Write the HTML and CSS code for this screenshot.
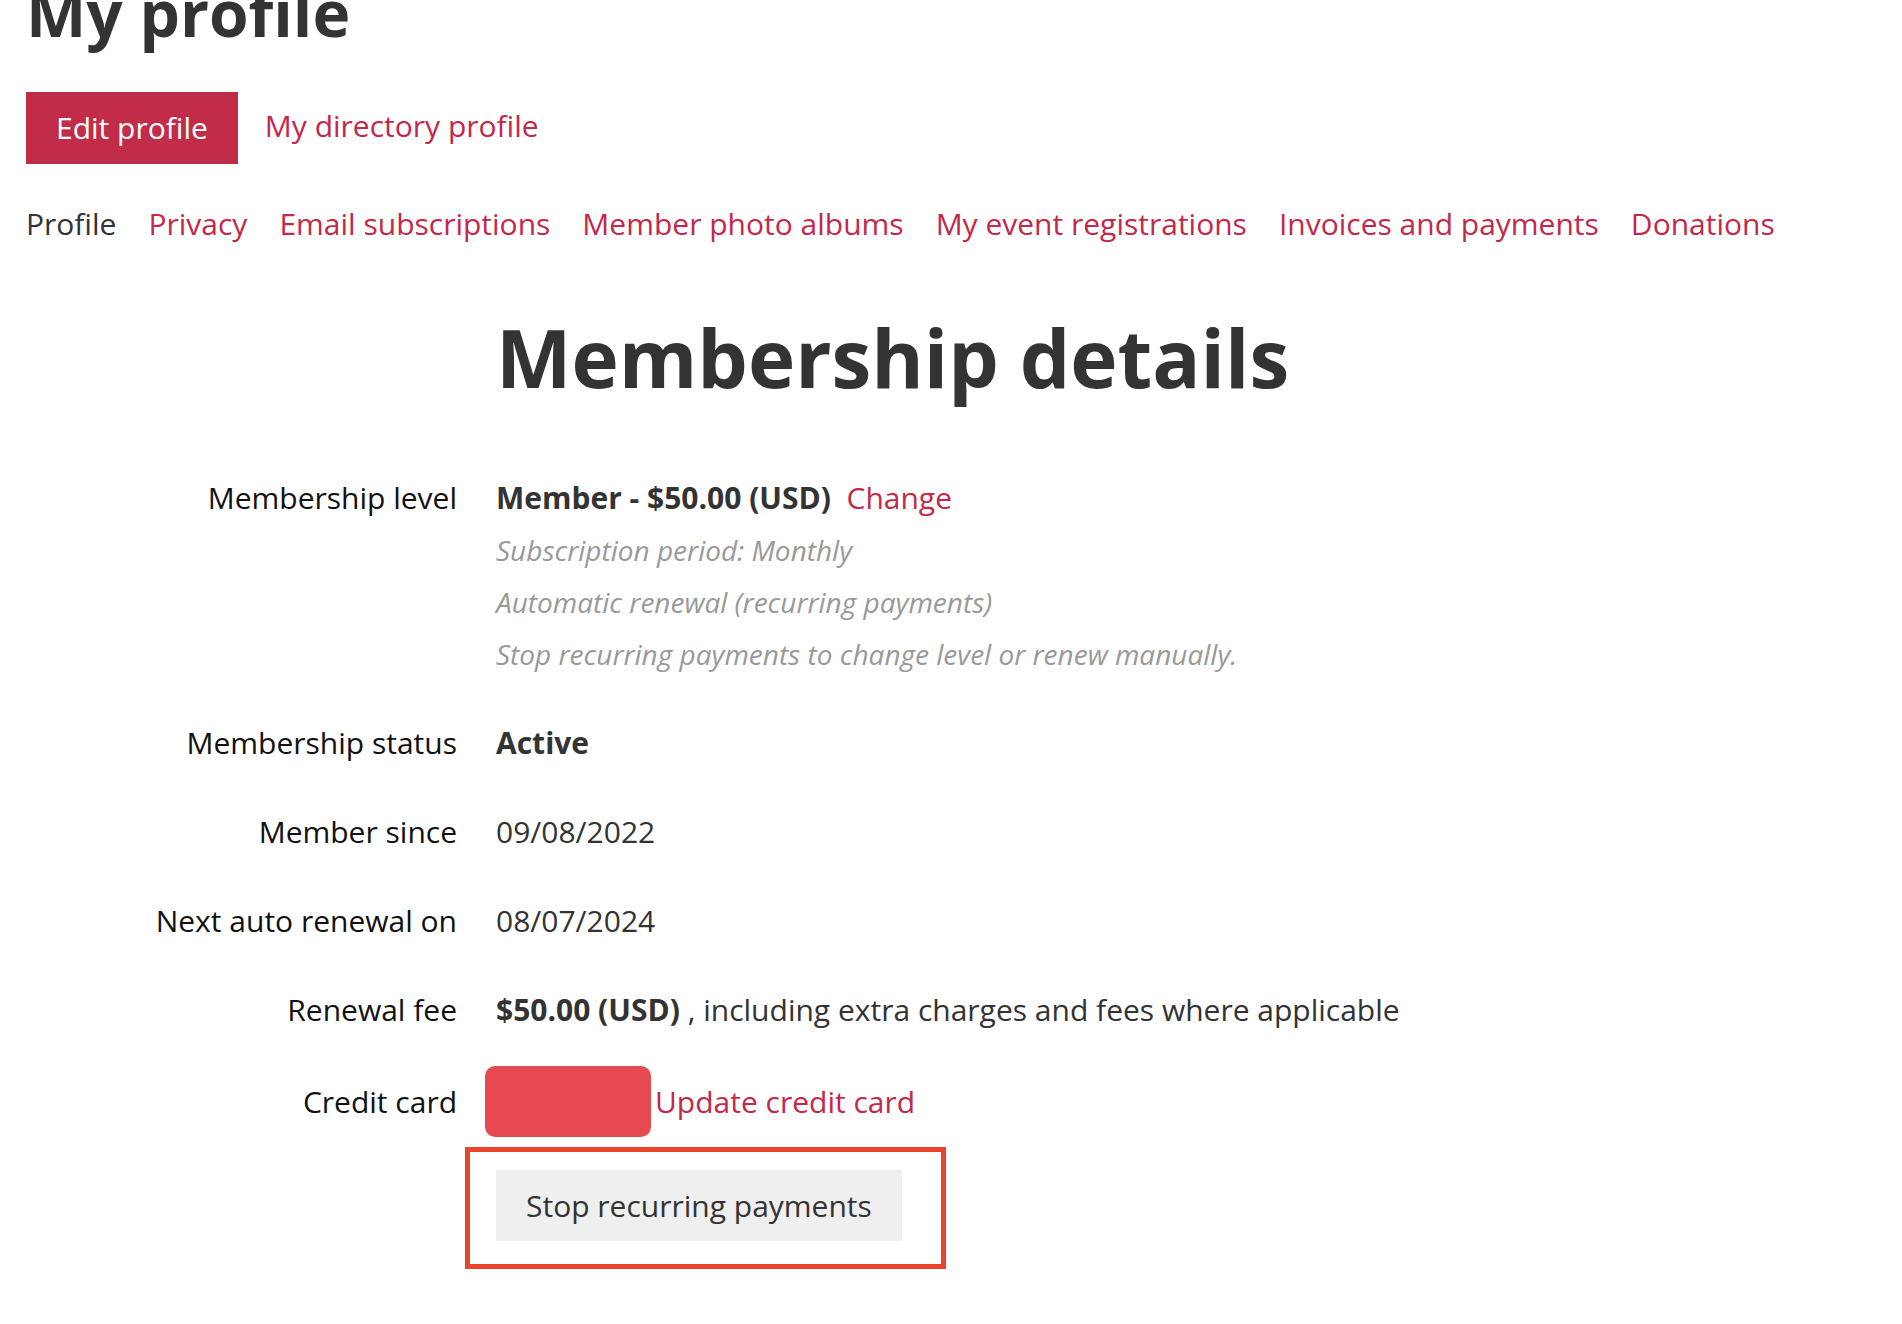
FILE: index.html
```html
<!DOCTYPE html>
<html lang="en">
<head>
<meta charset="utf-8">
<title>My profile</title>
<link rel="stylesheet" href="styles.css">
</head>
<body>
<div class="page">
  <h1 class="title">My profile</h1>
  <div class="actions">
    <a class="btn-primary" href="#">Edit profile</a>
    <a class="link" href="#">My directory profile</a>
  </div>
  <nav class="tabs">
    <span class="tab current">Profile</span>
    <a class="tab" href="#">Privacy</a>
    <a class="tab" href="#">Email subscriptions</a>
    <a class="tab" href="#">Member photo albums</a>
    <a class="tab" href="#">My event registrations</a>
    <a class="tab" href="#">Invoices and payments</a>
    <a class="tab" href="#">Donations</a>
  </nav>
  <section class="details">
    <div class="spacer"></div>
    <h2 class="heading">Membership details</h2>

    <div class="label">Membership level</div>
    <div class="value">
      <div><strong>Member - $50.00 (USD)</strong>&nbsp; <a class="link" href="#">Change</a></div>
      <div class="note">Subscription period: Monthly</div>
      <div class="note">Automatic renewal (recurring payments)</div>
      <div class="note">Stop recurring payments to change level or renew manually.</div>
    </div>

    <div class="label gap">Membership status</div>
    <div class="value gap"><strong>Active</strong></div>

    <div class="label gap">Member since</div>
    <div class="value gap">09/08/2022</div>

    <div class="label gap">Next auto renewal on</div>
    <div class="value gap">08/07/2024</div>

    <div class="label gap">Renewal fee</div>
    <div class="value gap"><strong>$50.00 (USD)</strong> , including extra charges and fees where applicable</div>

    <div class="label card-gap">Credit card</div>
    <div class="value card-gap card-row">
      <span class="card-mask"></span><a class="link" href="#">Update credit card</a>
    </div>

    <div class="spacer"></div>
    <div class="value highlight-wrap">
      <div class="highlight">
        <button class="btn-secondary" type="button">Stop recurring payments</button>
      </div>
    </div>
  </section>
</div>
</body>
</html>
```
FILE: styles.css
```css
html, body {
  margin: 0;
  padding: 0;
  background: #ffffff;
}

body {
  font-family: "Open Sans", "Noto Sans", sans-serif;
  font-size: 30px;
  line-height: 52px;
  color: #333333;
}

.page {
  padding-left: 26px;
  padding-bottom: 60px;
}

.title {
  margin: -20px 0 0 0;
  font-size: 64px;
  line-height: 65px;
  font-weight: 700;
  color: #333333;
}

.actions {
  display: flex;
  align-items: center;
  gap: 27px;
  margin-top: 47px;
}

.btn-primary {
  display: inline-flex;
  align-items: center;
  height: 72px;
  padding: 0 30px;
  background: #c12c48;
  color: #ffffff;
  text-decoration: none;
}

.link {
  color: #c4284a;
  text-decoration: none;
}

.actions .link {
  margin-top: -4px;
}

.tabs {
  display: flex;
  gap: 32px;
  margin-top: 34px;
}

.tab {
  color: #c4284a;
  text-decoration: none;
}

.tab.current {
  color: #333333;
}

.details {
  display: grid;
  grid-template-columns: 431px 1fr;
  column-gap: 39px;
  margin-top: 59px;
}

.heading {
  margin: 0 0 67px 0;
  font-size: 80px;
  line-height: 96px;
  font-weight: 700;
  color: #333333;
}

.label {
  text-align: right;
  color: #111111;
}

.value strong {
  font-weight: 700;
  color: #333333;
}

.note {
  font-size: 28px;
  font-style: italic;
  color: #999999;
}

.gap {
  margin-top: 37px;
}

.card-gap {
  margin-top: 30px;
}

.label.card-gap {
  display: flex;
  align-items: center;
  justify-content: flex-end;
  height: 71px;
}

.card-row {
  display: flex;
  align-items: center;
  height: 71px;
  margin-left: -11px;
}

.card-mask {
  display: inline-block;
  width: 166px;
  height: 71px;
  border-radius: 10px;
  background: #e44a4f;
  margin-right: 4px;
}

.highlight-wrap {
  margin-top: 10px;
  margin-left: -31px;
}

.highlight {
  display: inline-block;
  border: 5px solid #e9452b;
  padding: 18px 39px 23px 26px;
}

.btn-secondary {
  display: block;
  height: 71px;
  padding: 0 30px;
  border: none;
  background: #efefef;
  color: #333333;
  font-family: "Open Sans", "Noto Sans", sans-serif;
  font-size: 30px;
}
```
